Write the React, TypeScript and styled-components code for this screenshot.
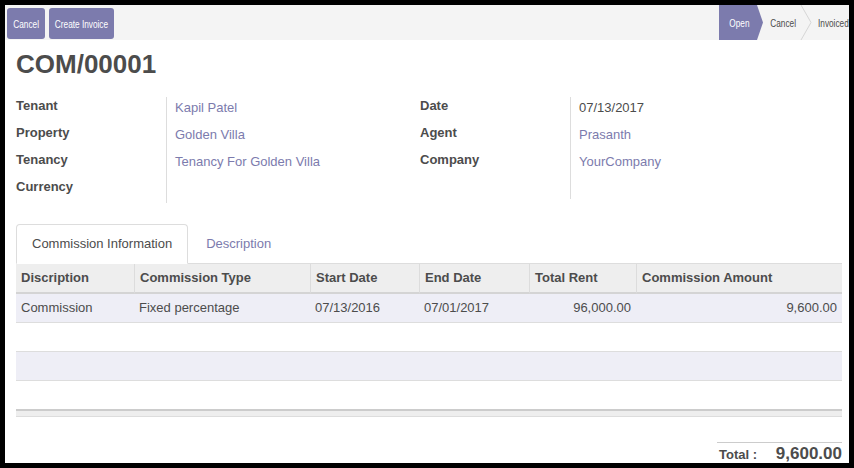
import React from "react";
import styled, { createGlobalStyle, css } from "styled-components";

const GlobalStyle = createGlobalStyle`
  html, body { margin: 0; padding: 0; background: #000; }
  body { font-family: "Liberation Sans", Arial, sans-serif; color: #4c4c4c; }
  * { box-sizing: border-box; }
`;

const Frame = styled.div`
  width: 854px;
  height: 468px;
  padding: 5px;
  background: #000;
`;

const Sheet = styled.div`
  width: 844px;
  height: 458px;
  background: #fff;
  overflow: hidden;
  display: flex;
  flex-direction: column;
`;

const ControlBar = styled.div`
  height: 35px;
  flex: none;
  display: flex;
  align-items: stretch;
  background: #f4f4f4;
  padding-left: 2px;
`;

const Actions = styled.div`
  display: flex;
  gap: 4px;
  padding: 3px 0 1px;
`;

const ActionButton = styled.button<{ $w: number }>`
  width: ${(p) => p.$w}px;
  height: 31px;
  border: none;
  border-radius: 3px;
  background: #7c7bad;
  color: #fff;
  display: flex;
  align-items: center;
  justify-content: center;
  padding: 0;
  font-family: inherit;
  font-size: 11px;
  white-space: nowrap;
  cursor: pointer;
`;

const Narrow = styled.span<{ $origin?: string }>`
  display: inline-block;
  white-space: nowrap;
  transform: scaleX(0.75);
  transform-origin: ${(p) => p.$origin ?? "center"};
`;

const Status = styled.div`
  margin-left: auto;
  width: 130px;
  display: flex;
  align-items: stretch;
  overflow: hidden;
  font-size: 11px;
`;

const Stage = styled.div<{ $active?: boolean; $w: number; $pl: number; $pr?: number; $start?: boolean }>`
  flex: none;
  width: ${(p) => p.$w}px;
  padding-left: ${(p) => p.$pl}px;
  padding-right: ${(p) => p.$pr ?? 0}px;
  display: flex;
  align-items: center;
  justify-content: ${(p) => (p.$start ? "flex-start" : "center")};
  color: #4c4c4c;
  ${(p) =>
    p.$active &&
    css`
      background: #7c7bad;
      color: #fff;
      clip-path: polygon(0 0, calc(100% - 6px) 0, 100% 50%, calc(100% - 6px) 100%, 0 100%);
    `}
`;

const Chevron = styled.svg`
  flex: none;
  width: 12px;
  height: 35px;
`;

const Body = styled.div`
  padding: 9px 7px 0 11px;
  display: flex;
  flex-direction: column;
`;

const Title = styled.h1`
  margin: 0;
  font-size: 26px;
  line-height: 30px;
  font-weight: bold;
  color: #4c4c4c;
`;

const Groups = styled.div`
  display: grid;
  grid-template-columns: 404px 1fr;
  margin-top: 13px;
`;

const Group = styled.div`
  display: grid;
  grid-template-columns: 150px 1fr;
  align-items: start;
`;

const Column = styled.div`
  display: flex;
  flex-direction: column;
`;

const Label = styled.div`
  height: 27px;
  line-height: 27px;
  font-size: 13px;
  font-weight: bold;
  color: #4c4c4c;
`;

const Values = styled.div<{ $h: number }>`
  margin-top: 5px;
  height: ${(p) => p.$h}px;
  border-left: 1px solid #ddd;
  padding: 1px 0 0 8px;
  display: flex;
  flex-direction: column;
`;

const Value = styled.div<{ $link?: boolean }>`
  height: 27px;
  line-height: 20px;
  font-size: 13px;
  color: ${(p) => (p.$link ? "#7c7bad" : "#4c4c4c")};
`;

const TabList = styled.div`
  display: flex;
  margin-top: 21px;
  border-bottom: 1px solid #ddd;
`;

const Tab = styled.div<{ $active?: boolean }>`
  margin-right: 2px;
  margin-bottom: -1px;
  padding: 9px 15px 9px;
  line-height: 20px;
  font-size: 13px;
  border: 1px solid transparent;
  border-radius: 4px 4px 0 0;
  color: #7c7bad;
  ${(p) =>
    p.$active &&
    css`
      border-color: #ddd #ddd transparent;
      background: #fff;
      color: #4c4c4c;
    `}
`;

const Table = styled.table`
  width: 100%;
  border-collapse: separate;
  border-spacing: 0;
  table-layout: fixed;
  font-size: 13px;
  line-height: 20px;

  tbody tr:nth-child(odd) td {
    background: #eeeef6;
  }
  tbody tr:last-child td {
    border-bottom: none;
  }
`;

const Th = styled.th`
  padding: 4px 5px;
  background: #eee;
  text-align: left;
  font-weight: bold;
  color: #4c4c4c;
  border-bottom: 2px solid #d4d4d4;
  border-left: 1px solid #dcdcdc;
  white-space: nowrap;
  &:first-child {
    border-left: none;
  }
`;

const Td = styled.td<{ $num?: boolean }>`
  padding: 4px 5px;
  color: #4c4c4c;
  text-align: ${(p) => (p.$num ? "right" : "left")};
  border-bottom: 1px solid #ddd;
  white-space: nowrap;
`;

const FootCell = styled.td`
  padding: 0;
  height: 8px;
  background: #eee;
  border-top: 2px solid #ccc;
  border-bottom: 1px solid #ddd;
`;

const TotalBox = styled.div`
  margin-top: 25px;
  margin-left: auto;
  width: 125px;
  border-top: 1px solid #ccc;
  padding: 1px 0 0 2px;
  display: flex;
  align-items: baseline;
  justify-content: space-between;
  color: #4c4c4c;
  font-weight: bold;
`;

const TotalLabel = styled.span`
  font-size: 13px;
`;

const TotalAmount = styled.span`
  font-size: 17px;
  line-height: 20px;
`;

const columns = [
  { title: "Discription", w: 118 },
  { title: "Commission Type", w: 176 },
  { title: "Start Date", w: 109 },
  { title: "End Date", w: 110 },
  { title: "Total Rent", w: 107 },
  { title: "Commission Amount", w: undefined as number | undefined },
];

export default function App() {
  return (
    <>
      <GlobalStyle />
      <Frame>
        <Sheet>
          <ControlBar>
            <Actions>
              <ActionButton $w={38}>
                <Narrow>Cancel</Narrow>
              </ActionButton>
              <ActionButton $w={65}>
                <Narrow>Create Invoice</Narrow>
              </ActionButton>
            </Actions>
            <Status>
              <Stage $active $w={44} $pl={2} $pr={6}>
                <Narrow>Open</Narrow>
              </Stage>
              <Stage $w={37} $pl={4}>
                <Narrow>Cancel</Narrow>
              </Stage>
              <Chevron viewBox="0 0 12 35">
                <polyline points="1,0 11,17.5 1,35" fill="none" stroke="#d6d6d6" strokeWidth="1" />
              </Chevron>
              <Stage $w={40} $pl={6} $start>
                <Narrow $origin="left">Invoiced</Narrow>
              </Stage>
            </Status>
          </ControlBar>
          <Body>
            <Title>COM/00001</Title>
            <Groups>
              <Group>
                <Column>
                  <Label>Tenant</Label>
                  <Label>Property</Label>
                  <Label>Tenancy</Label>
                  <Label>Currency</Label>
                </Column>
                <Values $h={106}>
                  <Value $link>Kapil Patel</Value>
                  <Value $link>Golden Villa</Value>
                  <Value $link>Tenancy For Golden Villa</Value>
                </Values>
              </Group>
              <Group>
                <Column>
                  <Label>Date</Label>
                  <Label>Agent</Label>
                  <Label>Company</Label>
                </Column>
                <Values $h={102}>
                  <Value>07/13/2017</Value>
                  <Value $link>Prasanth</Value>
                  <Value $link>YourCompany</Value>
                </Values>
              </Group>
            </Groups>
            <TabList>
              <Tab $active>Commission Information</Tab>
              <Tab>Description</Tab>
            </TabList>
            <Table>
              <colgroup>
                {columns.map((c) => (
                  <col key={c.title} style={c.w ? { width: c.w } : undefined} />
                ))}
              </colgroup>
              <thead>
                <tr>
                  {columns.map((c) => (
                    <Th key={c.title}>{c.title}</Th>
                  ))}
                </tr>
              </thead>
              <tbody>
                <tr>
                  <Td>Commission</Td>
                  <Td>Fixed percentage</Td>
                  <Td>07/13/2016</Td>
                  <Td>07/01/2017</Td>
                  <Td $num>96,000.00</Td>
                  <Td $num>9,600.00</Td>
                </tr>
                {[0, 1, 2].map((i) => (
                  <tr key={i}>
                    <Td colSpan={6}>&nbsp;</Td>
                  </tr>
                ))}
              </tbody>
              <tfoot>
                <tr>
                  <FootCell colSpan={6} />
                </tr>
              </tfoot>
            </Table>
            <TotalBox>
              <TotalLabel>Total :</TotalLabel>
              <TotalAmount>9,600.00</TotalAmount>
            </TotalBox>
          </Body>
        </Sheet>
      </Frame>
    </>
  );
}
